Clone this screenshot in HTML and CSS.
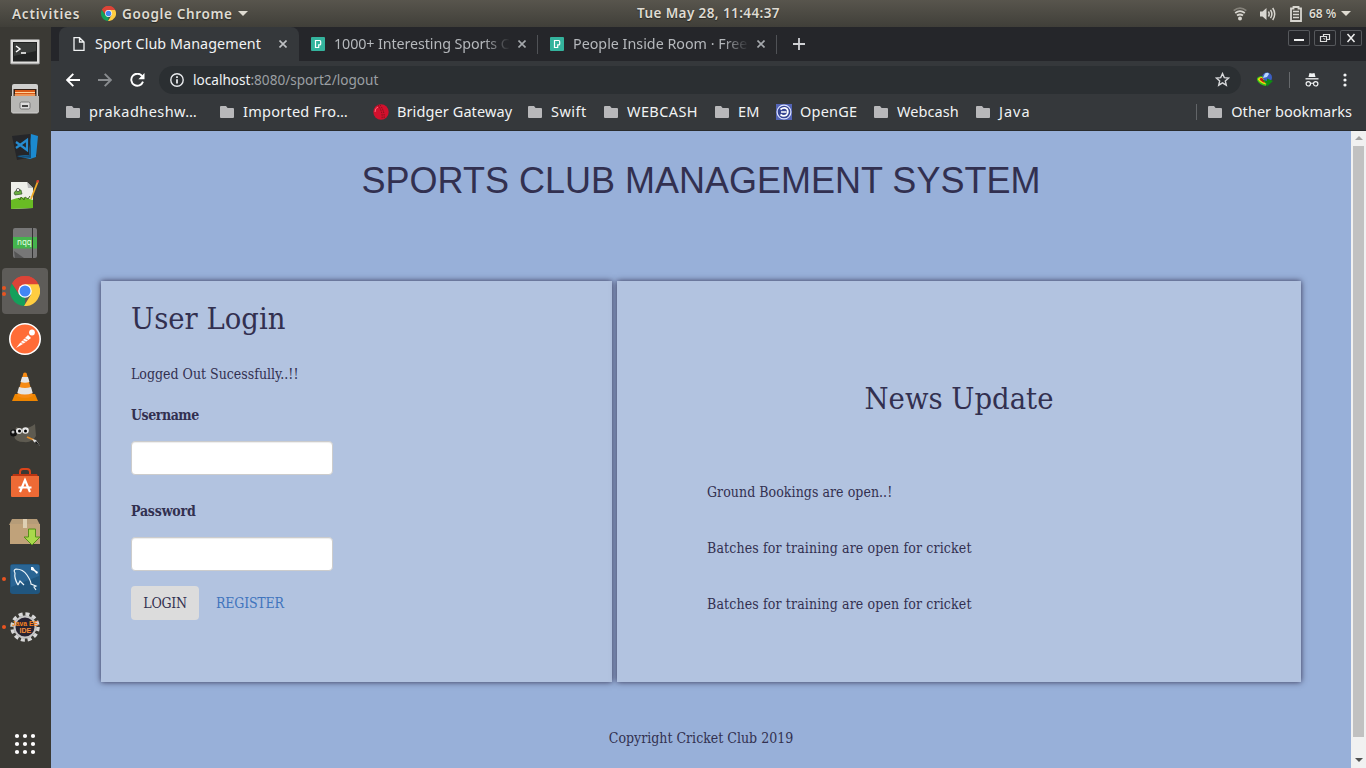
FILE: index.html
```html
<!DOCTYPE html>
<html lang="en">
<head>
<meta charset="utf-8">
<title>Sport Club Management</title>
<link rel="stylesheet" href="styles.css">
</head>
<body>
<svg class="defs" width="0" height="0">
  <symbol id="folder" viewBox="0 0 14 12"><path fill="#b8b8ba" d="M1 0h5l1.6 2H13q1 0 1 1v8q0 1-1 1H1q-1 0-1-1V1q0-1 1-1z"/></symbol>
  <symbol id="chrome" viewBox="0 0 30 30">
    <path fill="#dc4437" d="M15 15 2 7.500A15 15 0 0 1 28 7.500z"/>
    <path fill="#14a05b" d="M15 15 15 30A15 15 0 0 1 2 7.500L8.900 18.500z"/>
    <path fill="#ffcd41" d="M15 8H28.300A15 15 0 0 1 14 30L21 18.500z"/>
    <path fill="#dc4437" d="M2 7.500 9 18 15 8.200H28.300A15 15 0 0 0 2 7.500z"/>
    <circle cx="15" cy="15" r="6.800" fill="#fff"/><circle cx="15" cy="15" r="5.500" fill="#4286f5"/>
  </symbol>
  <symbol id="pexels" viewBox="0 0 14 14"><rect width="14" height="14" rx="1" fill="#34b39d"/><path d="M4.500 3.500h4.200q1 0 1 1.200v2.200q0 1-1 1h-1v2.600H4.500z" fill="none" stroke="#fff" stroke-width="1.200"/></symbol>
  <symbol id="cross" viewBox="0 0 8 8"><path d="M.5.5l7 7M7.500.5l-7 7" fill="none" stroke="currentColor" stroke-width="1.600"/></symbol>
</svg>

<header class="panel">
  <div class="panel-left">
    <span class="activities">Activities</span>
    <svg width="15" height="15"><use href="#chrome"/></svg>
    <span class="app-name">Google Chrome</span>
    <i class="caret"></i>
  </div>
  <span class="clock">Tue May 28, 11:44:37</span>
  <div class="panel-right">
    <svg class="wifi" width="14" height="14" viewBox="0 0 14 14" fill="none" stroke="#d8d6d0" stroke-width="1.800"><path d="M.7 3.600Q7-1.200 13.300 3.600" stroke="#85827a"/><path d="M2.200 6Q7 2.400 11.800 6M4 8.600Q7 6.400 10 8.600"/><circle cx="7" cy="11.400" r="2" fill="#d8d6d0" stroke="none"/></svg>
    <svg class="sound" width="16" height="14" viewBox="0 0 16 14" fill="none" stroke="#d8d6d0" stroke-width="1.500"><path d="M0 4.500h2.500L6.500 1v12l-4-3.500H0z" fill="#d8d6d0" stroke="none"/><path d="M8.400 4.500q1.600 2.500 0 5M10.500 2.800q2.800 4.200 0 8.400M12.700 1q4 6 0 12"/></svg>
    <svg class="battery" width="12" height="16" viewBox="0 0 12 16"><path fill="none" stroke="#d8d6d0" stroke-width="1.800" d="M1 2.500h2.500V1h5v1.500H11v12.500H1z"/><path d="M3 5.500h6M3 8.500h6M3 11.500h6" stroke="#d8d6d0" stroke-width="1.400"/></svg>
    <span class="percent">68 %</span>
    <i class="caret"></i>
  </div>
</header>

<div class="desktop">
  <nav class="dock">
    <div class="launcher terminal"><svg width="30" height="26" viewBox="0 0 30 26"><rect x=".5" y=".5" width="29" height="24.500" rx="1" fill="#dededc" stroke="#8b8b89"/><rect x="3" y="3" width="24" height="19.500" fill="#222423"/><path d="M4 4h22v8L4 17z" fill="#3a3d3b"/><path d="m6 7 4 3-4 3M11 14h5" fill="none" stroke="#fff" stroke-width="1.500"/></svg></div>
    <div class="launcher"><svg width="28" height="30" viewBox="0 0 28 30"><path d="M1 2q0-2 2-2h22q2 0 2 2v26q0 1.500-1 1.500H2q-1 0-1-1.500z" fill="#cfcfcd"/><rect x="2.500" y="5" width="23" height="8" fill="#352015"/><path d="M4 6h20v6H4z" fill="#d85a17"/><path d="M4 8.500h20M3.500 11h21" stroke="#ffd29b"/><path d="M0 12h28v16.500H0z" fill="#b7b7b4"/><rect x="9" y="18" width="10" height="7" rx="1.500" fill="#ddd" stroke="#777"/><path d="M11 21h6v2h-6z" fill="#444"/></svg></div>
    <div class="launcher"><svg width="28" height="28" viewBox="0 0 28 28"><path d="m1 3 18-2 7 22-20 4z" fill="#252629"/><path d="m20 1 7 2-2 21-6 2-13-3 12-1z" fill="#1b8ad0"/><path d="m20 4-2 18-12 2 14 1z" fill="#174f79"/><path d="m5 9 11 8V7L5 15" fill="none" stroke="#268cd0" stroke-width="2.200"/></svg></div>
    <div class="launcher"><svg width="30" height="30" viewBox="0 0 30 30"><path d="M1 2h16l6 6v20l-22 1z" fill="#eeefe9"/><path d="M1 20q11-5 22 0v8l-22 1z" fill="#69bc24"/><path d="m17 2 1 6h5z" fill="#bbb"/><path d="M4 13q2-4 7-3l1 4-7 1z" fill="#69ad40" stroke="#24451c" stroke-width=".6"/><circle cx="8" cy="10" r="1.600" fill="#fff" stroke="#222" stroke-width=".6"/><path d="m8 18 2 2 1-3 3 3 1-3 3 2 2-3" fill="none" stroke="#476c29"/><path d="m28 1-7 18" stroke="#efaa27" stroke-width="1.800"/><path d="m28 0-.8 2.500" stroke="#d73b32" stroke-width="2.200"/></svg></div>
    <div class="launcher"><svg width="24" height="30" viewBox="0 0 24 30"><rect width="24" height="30" rx="2" fill="#777"/><path d="m1 23 10 7H2z" fill="#555"/><path d="M0 9h24v11.500H0z" fill="#45b44d"/><path d="M19.500 0v30" stroke="#333"/><text x="4" y="17" class="icon-nqq">nqq</text></svg></div>
    <div class="launcher active two-dots"><svg width="30" height="30"><use href="#chrome"/></svg></div>
    <div class="launcher"><svg width="32" height="32" viewBox="0 0 32 32"><circle cx="16" cy="16" r="15.200" fill="#ff6c37" stroke="#fff" stroke-width="1.600"/><path d="m7 25 4-5 8-8 3 3-8 6z" fill="#fff"/><circle cx="23" cy="9.500" r="2.900" fill="#fff"/><path d="m11 19 4 2M13 17l4 2M15 15l4 2" stroke="#ff784a" stroke-width=".8"/></svg></div>
    <div class="launcher"><svg width="26" height="30" viewBox="0 0 26 30"><path d="M3 22h20l3 7H0z" fill="#ee8500"/><path d="M11.500 1q1.500-1 3 0l6.500 23q-8 4-16 0z" fill="#f68b14"/><path d="m10 5 6-.1 1.500 5q-4.500 1.500-9 0zM7 15q6 2 12 0l1.700 6q-8 3-15.400 0z" fill="#e5e5e5"/></svg></div>
    <div class="launcher"><svg width="30" height="26" viewBox="0 0 30 26"><path d="m25 2 1 12q-4 7-12 6Q5 20 4 14l2-9q4 2 9 1 5 0 10-4z" fill="#5e5b51"/><circle cx="3.500" cy="11" r="3.500" fill="#111"/><circle cx="3" cy="10" r="1.500" fill="#bbb"/><circle cx="9" cy="9" r="3" fill="#e8e8e8"/><circle cx="15.500" cy="8.500" r="3.300" fill="#e8e8e8"/><circle cx="9.500" cy="9" r="1.500"/><circle cx="15.500" cy="9" r="1.500"/><path d="m17 15 7 3" stroke="#e58b24" stroke-width="1.800"/><path d="m22 17 4 1 4 6-6-4z" fill="#ddd"/><path d="m26 19 4 5-5-3z" fill="#111"/></svg></div>
    <div class="launcher"><svg width="28" height="30" viewBox="0 0 28 30"><path d="M9 9V4q0-3 3-3h4q3 0 3 3v5" fill="none" stroke="#d9441b" stroke-width="2"/><path d="m2 6h24l2 5H0z" fill="#ba3512"/><path d="M0 8h28v20q0 1-1 1H1q-1 0-1-1z" fill="#ee6a35"/><path d="m9 24 5-12 5 12M7.500 19.500h13" fill="none" stroke="#fff" stroke-width="2.200"/></svg></div>
    <div class="launcher package"><svg width="32" height="28" viewBox="0 0 32 28"><path d="M3 1h25l3 6H0z" fill="#b69c78"/><path d="M1 6h30v20H1z" fill="#c0a27a"/><path d="M14 1h4v9h-4z" fill="#decfb3"/><path d="M19.500 11h7v8H31l-8 8-8-8h4.500z" fill="#a9d94b" stroke="#549018"/></svg></div>
    <div class="launcher one-dot"><svg width="30" height="30" viewBox="0 0 30 30"><rect width="30" height="30" rx="3" fill="#20567f"/><path d="M1 1h28v11L1 23z" fill="#2a6594"/><path d="M8 21Q4 14 5 9q-2-3 1-4 7 0 11 6 4 6 4 9l5 2-2 1 2 3M8 21l2-4 4 4" fill="none" stroke="#eef6fa" stroke-width="1.200"/><path d="m21 3 2 0 2 3 3 2-1 2-3-3-3-1z" fill="#fff"/></svg></div>
    <div class="launcher one-dot"><svg width="30" height="30" viewBox="0 0 30 30"><circle cx="15" cy="15" r="13" fill="none" stroke="#d7d7d7" stroke-width="3.500" stroke-dasharray="4 2.810"/><circle cx="15" cy="15" r="10.500" fill="#282331" stroke="#c5c5c5" stroke-width="2"/><text x="2" y="14" textLength="26" lengthAdjust="spacingAndGlyphs" class="icon-java">Java EE</text><text x="9.500" y="21" class="icon-ide">IDE</text></svg></div>
    <div class="apps"><svg width="22" height="22" viewBox="0 0 22 22" fill="#fff"><circle cx="3" cy="3" r="2.100"/><circle cx="11" cy="3" r="2.100"/><circle cx="19" cy="3" r="2.100"/><circle cx="3" cy="11" r="2.100"/><circle cx="11" cy="11" r="2.100"/><circle cx="19" cy="11" r="2.100"/><circle cx="3" cy="19" r="2.100"/><circle cx="11" cy="19" r="2.100"/><circle cx="19" cy="19" r="2.100"/></svg></div>
  </nav>

  <main class="browser">
    <div class="tabs">
      <div class="tab current">
        <svg width="12" height="14" viewBox="0 0 12 14" fill="none" stroke="#f1f3f4" stroke-width="1.300"><path d="M1 .7h5.500L11 5v8.300H1zM6.500.7V5H11"/></svg>
        <span class="tab-title">Sport Club Management</span><svg class="close" width="8" height="8"><use href="#cross"/></svg>
      </div>
      <div class="tab second"><svg width="14" height="14"><use href="#pexels"/></svg><span class="tab-title fade">1000+ Interesting Sports C</span><svg class="close" width="8" height="8"><use href="#cross"/></svg></div>
      <div class="tab third"><svg width="14" height="14"><use href="#pexels"/></svg><span class="tab-title fade">People Inside Room · Free</span><svg class="close" width="8" height="8"><use href="#cross"/></svg></div>
      <svg class="new-tab" width="12" height="12" viewBox="0 0 12 12"><path d="M6 0v12M0 6h12" stroke="#d0d1d4" stroke-width="1.800"/></svg>
      <div class="window-buttons">
        <svg width="22" height="16" viewBox="0 0 22 16"><path d="M6 10h10" stroke="#eee" stroke-width="2"/></svg>
        <svg width="22" height="16" viewBox="0 0 22 16" fill="none" stroke="#ddd" stroke-width="1.200"><path d="M9.500 6V4.500h6v5H13"/><path d="M6.500 6.500h6v5h-6z"/><path d="M9 8.500h1.500v1.500" stroke="#888"/></svg>
        <svg width="22" height="16" viewBox="0 0 22 16"><path d="m7.500 4 7 8M14.500 4l-7 8" stroke="#eee" stroke-width="1.500"/></svg>
      </div>
    </div>

    <div class="toolbar">
      <svg width="14" height="14" viewBox="0 0 14 14" fill="none" stroke="#fff" stroke-width="1.900"><path d="M14 7H1.500M7.300.8 1.200 7l6.100 6.200"/></svg>
      <svg width="14" height="14" viewBox="0 0 14 14" fill="none" stroke="#898c8f" stroke-width="1.900"><path d="M0 7h12.500M6.700.8 12.800 7l-6.100 6.200"/></svg>
      <svg width="15" height="14" viewBox="0 0 15 14"><path d="M12.200 3.200A6 6 0 1 0 13 8.600" fill="none" stroke="#fff" stroke-width="1.900"/><path d="M14.500 0v6.200H8.400z" fill="#fff"/></svg>
      <div class="omnibox">
        <svg width="14" height="14" viewBox="0 0 14 14"><circle cx="7" cy="7" r="6.200" fill="none" stroke="#e8eaed" stroke-width="1.400"/><path d="M7 6.200v4.300M7 3.300v1.600" stroke="#e8eaed" stroke-width="1.800"/></svg>
        <span class="url">localhost<span>:8080/sport2/logout</span></span>
        <svg class="star" width="15" height="15" viewBox="0 0 15 15"><path d="m7.500 1.600 1.800 4 4.300.4-3.300 2.900 1 4.300-3.800-2.300-3.800 2.300 1-4.300L1.400 6l4.300-.4z" fill="none" stroke="#d7d8da" stroke-width="1.400"/></svg>
      </div>
      <svg class="globe" width="16" height="15" viewBox="0 0 16 15"><circle cx="10" cy="5.500" r="5" fill="#3c5fc4"/><path d="M8 1.500q3-1.500 4 .5l-2 3-4 1z" fill="#b8d7ff"/><path d="M4 4Q-1 5 0 8q2 5 9 6l1-3Q4 9 6 5z" fill="#36c51b"/><path d="M5 5Q1 5 1 7.500 3 11 9 12.500L7 8z" fill="#f1d80d"/><path d="M5 6Q2 6 3 8q2 2 5 3L6 7z" fill="#bd1919"/><path d="M5 7.500 10 9V6.500l6 2.500-6 5.500V12z" fill="#0c8c13"/></svg>
      <i class="tool-divider"></i>
      <svg class="incognito" width="14" height="14" viewBox="0 0 14 14" fill="none" stroke="#f1f3f4"><path d="m3.500 4 1-4 2.500.5L9.500 0l1 4z" fill="#f1f3f4" stroke="none"/><path d="M.5 5.800h13" stroke-width="1.300"/><circle cx="3.300" cy="10.800" r="2.200" stroke-width="1.200"/><circle cx="10.700" cy="10.800" r="2.200" stroke-width="1.200"/><path d="M5.500 10.500q1.500-.8 3 0"/></svg>
      <svg class="kebab" width="4" height="14" viewBox="0 0 4 14" fill="#f1f3f4"><circle cx="2" cy="2" r="1.600"/><circle cx="2" cy="7" r="1.600"/><circle cx="2" cy="12" r="1.600"/></svg>
    </div>

    <div class="bookmarks">
      <div class="bookmark wide"><svg width="14" height="12"><use href="#folder"/></svg><span>prakadheshw…</span></div>
      <div class="bookmark imported"><svg width="14" height="12"><use href="#folder"/></svg><span>Imported Fro…</span></div>
      <div class="bookmark"><svg width="16" height="16" viewBox="0 0 16 16"><circle cx="8" cy="8" r="7.700" fill="#d3102d"/><path d="M5 1q5 7 4 14M7 .8q5 7 4 14" fill="none" stroke="#77101b" stroke-dasharray="1.500 1"/><path d="M2 8q0-4 3-5" stroke="#ff6b7d" fill="none"/></svg><span>Bridger Gateway</span></div>
      <div class="bookmark swift"><svg width="14" height="12"><use href="#folder"/></svg><span>Swift</span></div>
      <div class="bookmark"><svg width="14" height="12"><use href="#folder"/></svg><span>WEBCASH</span></div>
      <div class="bookmark"><svg width="14" height="12"><use href="#folder"/></svg><span>EM</span></div>
      <div class="bookmark"><svg width="16" height="16" viewBox="0 0 16 16"><path fill="#5364b5" d="M0 0h16v16H0z"/><circle cx="8" cy="8" r="6.900" fill="#354492" stroke="#dce2ff" stroke-width="1.200"/><path d="M4.500 5.500Q8 2.500 11 5q2 3-.5 6-3 2-6-.5M5 8h5.500" fill="none" stroke="#fff" stroke-width="1.700"/></svg><span>OpenGE</span></div>
      <div class="bookmark tight"><svg width="14" height="12"><use href="#folder"/></svg><span>Webcash</span></div>
      <div class="bookmark java"><svg width="14" height="12"><use href="#folder"/></svg><span>Java</span></div>
      <div class="bookmark other"><svg width="14" height="12"><use href="#folder"/></svg><span>Other bookmarks</span></div>
    </div>

    <div class="viewport">
      <div class="page">
        <h1>SPORTS CLUB MANAGEMENT SYSTEM</h1>
        <div class="cards">
          <form class="card login">
            <h2>User Login</h2>
            <p class="message">Logged Out Sucessfully..!!</p>
            <label for="user">Username</label>
            <input id="user" type="text">
            <label class="pass-label" for="pass">Password</label>
            <input id="pass" type="password">
            <div class="actions"><button type="button">LOGIN</button><a>REGISTER</a></div>
          </form>
          <section class="card news">
            <h2>News Update</h2>
            <p class="ground">Ground Bookings are open..!</p>
            <p>Batches for training are open for cricket</p>
            <p>Batches for training are open for cricket</p>
          </section>
        </div>
        <footer>Copyright Cricket Club 2019</footer>
      </div>
      <div class="scrollbar"><i class="arrow up"></i><i class="thumb"></i><i class="arrow down"></i></div>
    </div>
  </main>
</div>
</body>
</html>
```
FILE: styles.css
```css
* { box-sizing: border-box; }
body { margin: 0; width: 1366px; height: 768px; overflow: hidden; font-family: "Noto Sans", "Open Sans", sans-serif; }
svg { flex: none; display: block; }
.defs { position: absolute; }
h1, h2, p { margin: 0; font-weight: 400; }

.panel { height: 27px; display: grid; grid-template-columns: 1fr auto 1fr; align-items: center; background: linear-gradient(#58554d, #403f39); color: #dfdbd2; font-size: 13.5px; font-weight: 600; white-space: nowrap; text-shadow: 0 1px 1px #282824; }
.panel-left { display: flex; align-items: center; padding-left: 12px; }
.activities { width: 89px; letter-spacing: .8px; }
.app-name { margin-left: 6px; width: 111px; letter-spacing: .65px; }
.caret { border: 5px solid transparent; border-top-color: #dfdbd2; border-bottom: 0; margin-left: 5px; }
.clock { margin-left: 51px; width: 144px; text-align: center; letter-spacing: .4px; padding-bottom: 1px; }
.panel-right { display: flex; align-items: center; justify-content: flex-end; padding-right: 15px; }
.sound { margin-left: 13px; }
.battery { margin-left: 14px; }
.percent { font-size: 12px; margin-left: 7px; width: 27px; }

.desktop { display: flex; height: 741px; }
.dock { width: 51px; height: 741px; background: #3a3934; display: flex; flex-direction: column; padding-top: 1px; }
.launcher { width: 46px; height: 46px; margin: 0 0 2px 2px; display: grid; place-items: center; position: relative; }
.launcher.terminal, .launcher.package { padding-top: 2px; }
.launcher.active { background: #5e5c59; border-radius: 4px; }
.one-dot::before, .two-dots::before { content: ""; position: absolute; left: 0; top: 21px; width: 4px; height: 4px; border-radius: 50%; background: #e95420; }
.two-dots::before { top: 18px; box-shadow: 0 6px #e95420; }
.apps { margin: auto 0 13px 14px; }
.icon-nqq { font: 8px "Noto Sans", sans-serif; fill: #e0ffe1; }
.icon-java { font: bold 7px "Liberation Sans", sans-serif; fill: #f58220; }
.icon-ide { font: bold 7px "Liberation Sans", sans-serif; fill: #f9903a; }

.browser { width: 1315px; height: 741px; background: #35383b; }
.tabs { height: 34px; background: #25262a; display: flex; align-items: center; padding-left: 8px; color: #b5b8bc; }
.tab { height: 34px; display: flex; align-items: center; font-size: 14.3px; }
.tab-title { width: 176px; white-space: nowrap; margin-left: 9px; padding-bottom: 2px; }
.tab.current { width: 240px; padding-left: 14px; background: #35383b; color: #f1f3f4; border-radius: 8px 8px 0 0; }
.tab.current .tab-title { width: 174px; margin-left: 10px; letter-spacing: .08px; }
.close { color: #a5a8ac; margin-left: 8px; }
.current .close { color: #bfc1c4; margin-left: 10px; }
.second, .third { width: 239px; padding-left: 12px; background: linear-gradient(#505256, #505256) right center / 1px 19px no-repeat; }
.tab-title.fade { letter-spacing: -.1px; -webkit-mask-image: linear-gradient(90deg, #000 150px, transparent 176px); mask-image: linear-gradient(90deg, #000 150px, transparent 176px); }
.third .tab-title.fade { letter-spacing: 0; }
.new-tab { margin-left: 16px; }
.window-buttons { display: flex; gap: 4px; margin: -12px 4px 0 auto; }
.window-buttons svg { box-shadow: inset 0 0 0 1px #56585c; border-radius: 2px; }

.toolbar { height: 37px; display: flex; align-items: center; padding-left: 15px; }
.toolbar > svg:nth-child(2) { margin-left: 18px; }
.toolbar > svg:nth-child(3) { margin-left: 18px; }
.omnibox { width: 1082px; height: 28px; margin-left: 14px; border-radius: 14px; background: #2b2f32; display: flex; align-items: center; padding: 0 11px; }
.url { margin-left: 9px; color: #f1f3f4; font-size: 13.6px; }
.url span { color: #9b9fa3; }
.star { margin-left: auto; }
.globe { margin-left: 16px; }
.tool-divider { width: 1px; height: 16px; background: #66696c; margin-left: 16px; }
.incognito { margin-left: 15px; }
.kebab { margin-left: 24px; }

.bookmarks { height: 33px; border-bottom: 1px solid #292b2d; display: grid; grid-template-columns: 154px 154px 154px 76px 111px 61px 98px 102px 80px 1fr; padding-left: 15px; padding-bottom: 5px; color: #f1f3f4; font-size: 14.5px; letter-spacing: .1px; }
.bookmark { display: flex; align-items: center; gap: 9px; white-space: nowrap; }
.bookmark span { padding-bottom: 2px; }
.bookmark:nth-child(3) { gap: 8px; margin-left: -1px; }
.bookmark:nth-child(5) { letter-spacing: .4px; }
.bookmark:nth-child(7) { gap: 8px; letter-spacing: .2px; }
.bookmark.wide { letter-spacing: .45px; }
.bookmark.imported { letter-spacing: .25px; }
.bookmark.swift { letter-spacing: .5px; }
.bookmark.java { letter-spacing: 1px; }
.bookmark.tight { letter-spacing: .05px; }
.other { letter-spacing: .05px; justify-self: end; margin-right: 14px; padding-left: 12px; background: linear-gradient(#626568, #626568) left center / 1px 16px no-repeat; }

.viewport { display: flex; height: 637px; }
.page { width: 1300px; height: 637px; background: #98b0d9; color: #323050; padding: 0 50px; font: 14px/20px "DejaVu Serif Condensed", "DejaVu Serif", serif; font-stretch: condensed; }
.page h1 { font: 36px/40px "Liberation Sans", Arial, sans-serif; text-align: center; padding-top: 30px; height: 150px; white-space: nowrap; }
.cards { display: flex; gap: 5px; height: 401px; }
.card { background: #b2c3e0; box-shadow: 0 0 6px #323050; }
.login { width: 511px; padding: 21px 30px 0; display: flex; flex-direction: column; align-items: flex-start; }
.card h2 { font-size: 30.6px; line-height: 33px; }
.message { margin-top: 29px; }
label { font-weight: 700; margin-top: 21px; letter-spacing: -.45px; }
input { width: 202px; height: 34px; margin-top: 16px; border: 1px solid #ccc; border-radius: 4px; background: #fff; box-shadow: inset 0 1px 1px rgba(0,0,0,.075); }
.pass-label { margin-top: 26px; letter-spacing: -.2px; }
.actions { display: flex; align-items: center; margin-top: 15px; }
button { width: 68px; height: 34px; padding: 0; border: 0; border-radius: 4px; background: #dcdcdc; color: #323050; font: inherit; font-stretch: condensed; letter-spacing: -.3px; }
.actions a { margin-left: 17px; color: #4074bd; letter-spacing: -.2px; }
.news { width: 684px; padding: 101px 90px 0; }
.news h2 { text-align: center; }
.news p { margin-top: 36px; letter-spacing: .14px; }
.news .ground { margin-top: 67px; letter-spacing: .05px; }
footer { text-align: center; padding-top: 46px; }
.scrollbar { width: 15px; background: #f1f1f1; display: flex; flex-direction: column; align-items: center; }
.thumb { width: 11px; height: 591px; background: #c1c1c1; margin-top: 6px; }
.arrow { border: 4px solid transparent; }
.arrow.up { border-top: 0; border-bottom-color: #a3a3a3; margin-top: 5px; }
.arrow.down { border-bottom: 0; border-top-color: #505050; margin-top: 21px; }
```
